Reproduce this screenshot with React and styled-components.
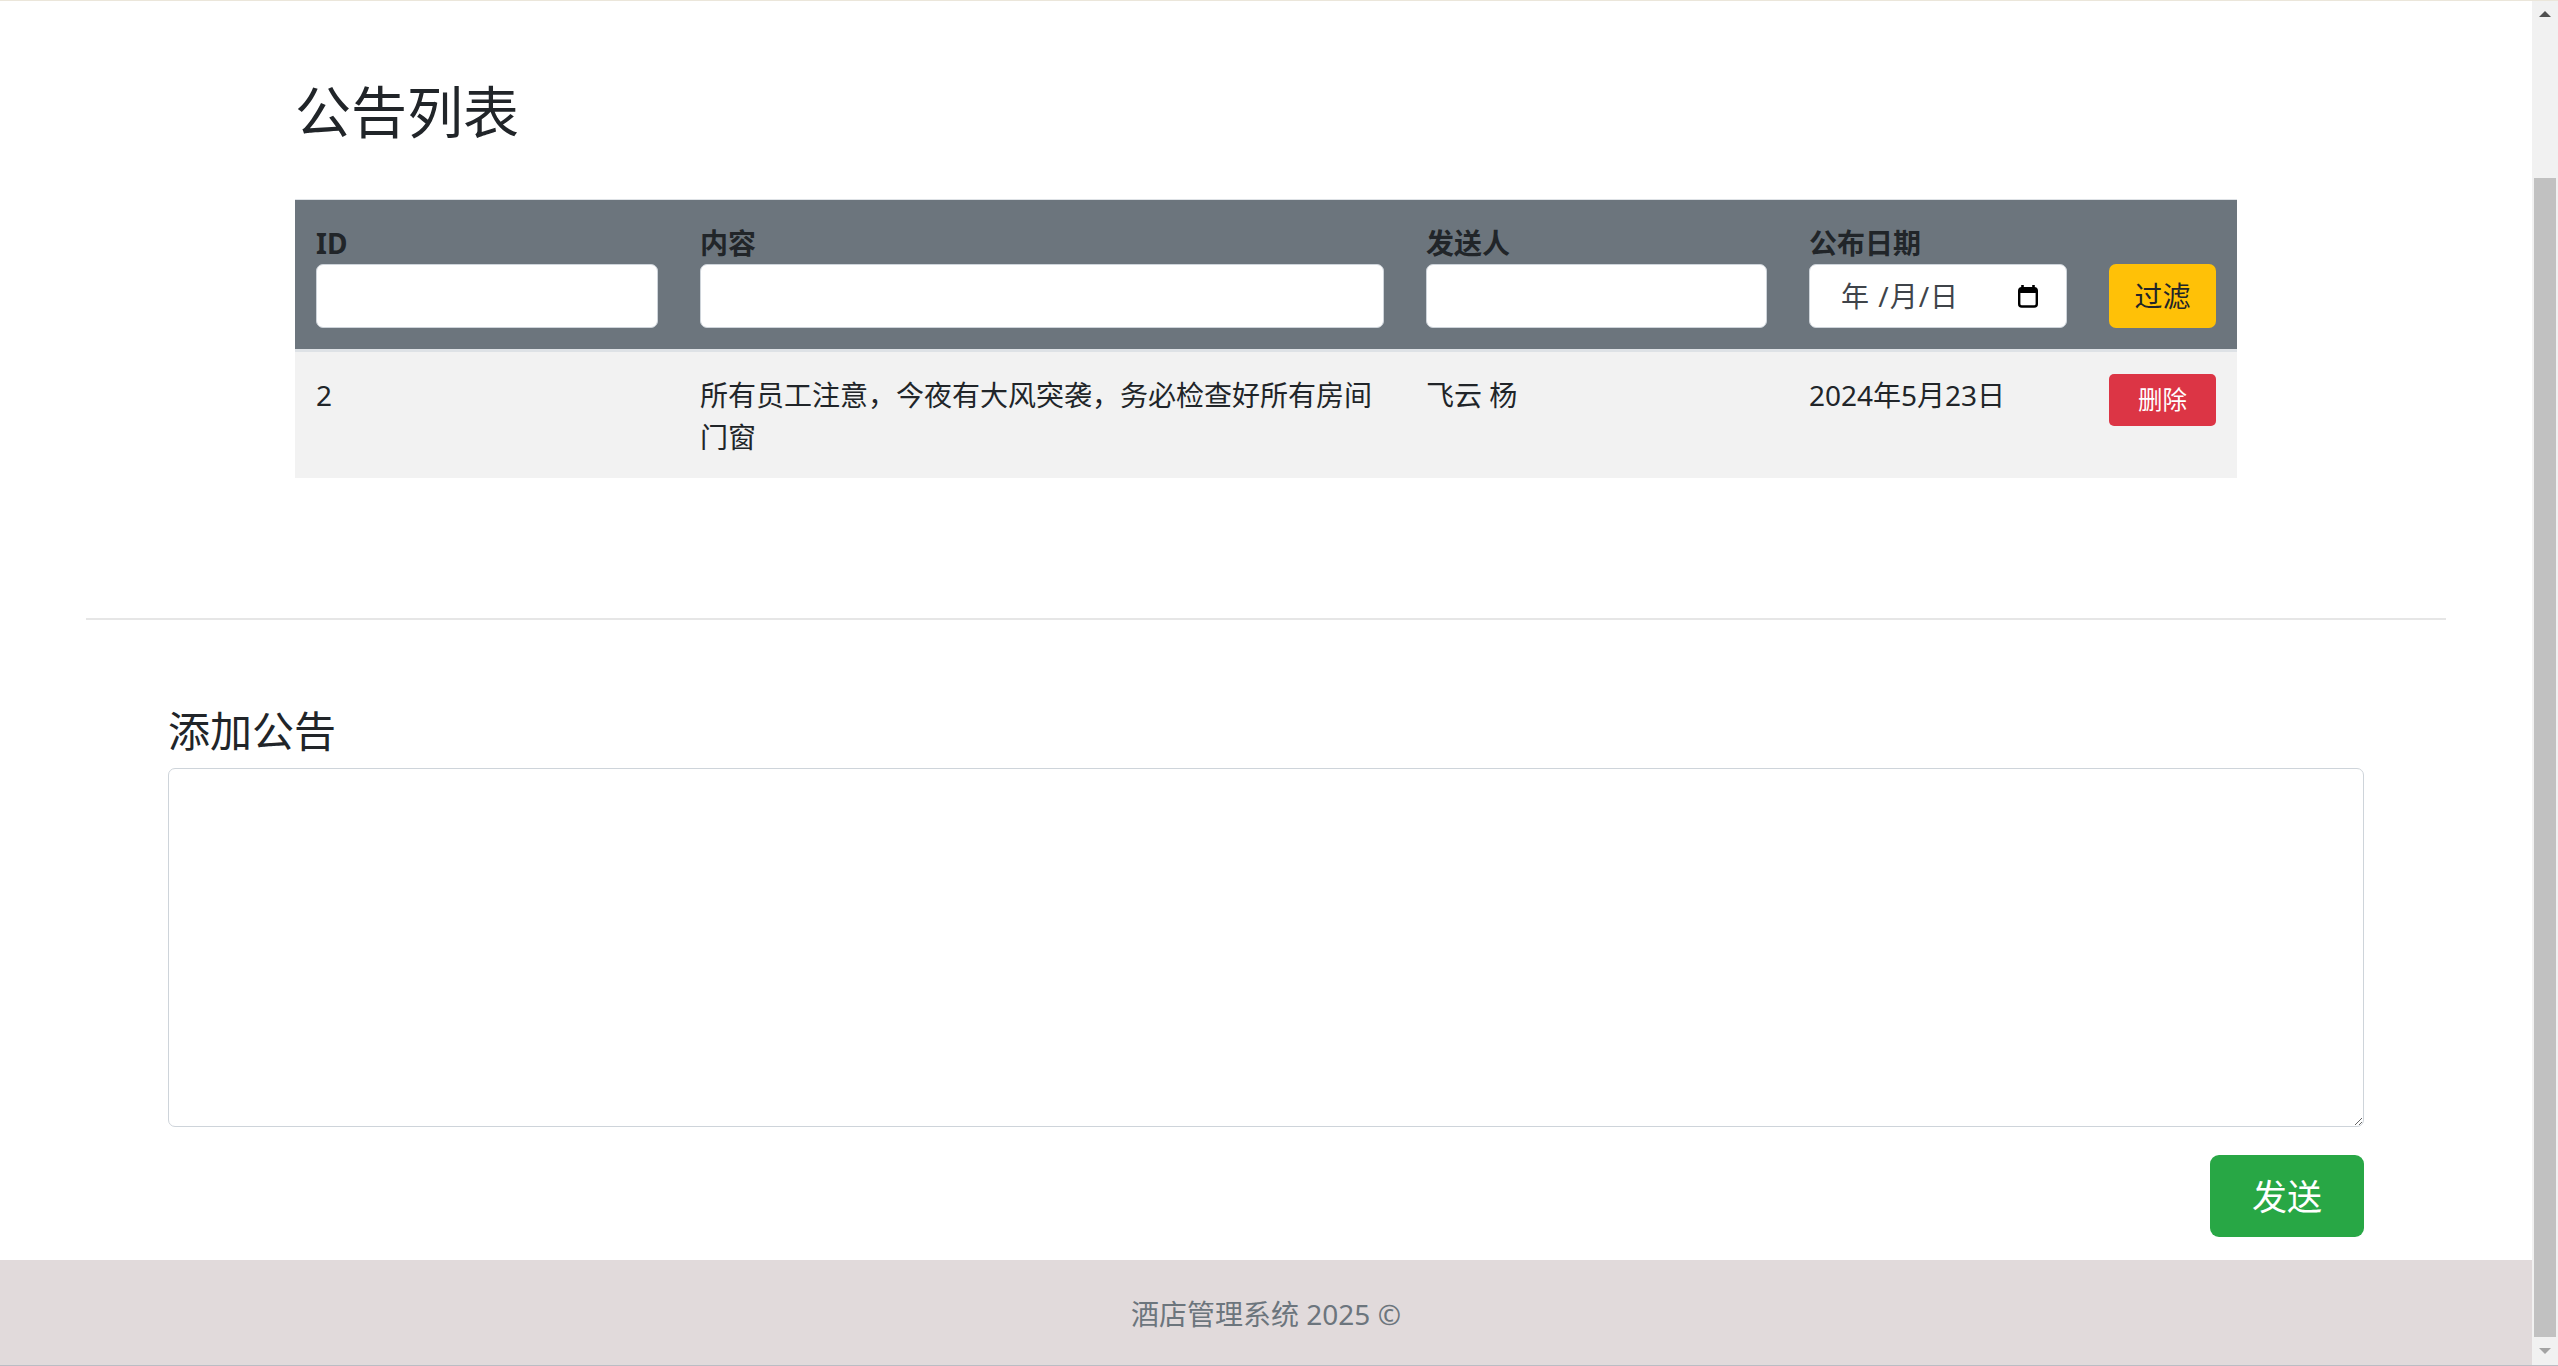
import React from 'react';
import styled, { createGlobalStyle } from 'styled-components';

const GlobalStyle = createGlobalStyle`
  *, *::before, *::after {
    box-sizing: border-box;
  }
  body {
    margin: 0;
    overflow: hidden;
    font-family: "Noto Sans", "Noto Sans CJK SC", sans-serif;
    color: #212529;
    background: #fff;
  }
`;

const Page = styled.div`
  display: flex;
  height: 1366px;
  border-top: 1px solid #ebe6da;
  border-bottom: 1px solid #babdc4;
`;

const Main = styled.div`
  flex: 1;
  display: flex;
  flex-direction: column;
  min-width: 0;
`;

const ListSection = styled.section`
  width: 1942px;
  margin: 0 auto;
`;

const Title = styled.h2`
  margin: 77px 0 0;
  font-size: 56px;
  font-weight: 400;
  line-height: 67px;
`;

const Table = styled.table`
  width: 100%;
  margin-top: 54px;
  border-collapse: collapse;
  table-layout: fixed;
  border-top: 1px solid #dee2e6;
  font-size: 28px;
  line-height: 42px;
`;

const HeadCell = styled.th`
  background: #6c757d;
  padding: 22px 21px 21px;
  text-align: left;
  vertical-align: bottom;
  border-bottom: 3px solid #dee2e6;
  label {
    display: block;
    font-weight: 700;
    color: #212529;
  }
`;

const Cell = styled.td`
  background: #f2f2f2;
  padding: 22px 21px 20px;
  vertical-align: top;
  color: #212529;
`;

const TextInput = styled.input`
  display: block;
  width: 100%;
  height: 64px;
  border: 1px solid #ced4da;
  border-radius: 7px;
  background: #fff;
  font: inherit;
`;

const DateField = styled.div`
  display: flex;
  align-items: center;
  justify-content: space-between;
  height: 64px;
  padding: 0 27px 0 31px;
  border: 1px solid #ced4da;
  border-radius: 7px;
  background: #fff;
  color: #3f444a;
  font-weight: 400;
  span {
    letter-spacing: 1px;
  }
`;

const Button = styled.button`
  border: none;
  font-family: inherit;
  color: ${(p) => p.$color};
  background: ${(p) => p.$bg};
  font-size: ${(p) => p.$size || 28}px;
  height: ${(p) => p.$height}px;
  border-radius: ${(p) => p.$radius || 7}px;
  width: ${(p) => (p.$block ? '100%' : 'auto')};
  padding: 0 ${(p) => p.$padX || 0}px;
  line-height: 1;
  display: block;
`;

const Divider = styled.hr`
  width: 2360px;
  margin: 140px auto 0;
  border: none;
  border-top: 2px solid #e6e6e6;
`;

const AddSection = styled.section`
  width: 2196px;
  margin: 86px auto 0;
`;

const SubTitle = styled.h4`
  margin: 0 0 12px;
  font-size: 42px;
  font-weight: 400;
  line-height: 50px;
`;

const TextArea = styled.textarea`
  display: block;
  width: 100%;
  height: 359px;
  border: 1px solid #ced4da;
  border-radius: 7px;
  font: inherit;
  font-size: 28px;
`;

const Actions = styled.div`
  display: flex;
  justify-content: flex-end;
  margin-top: 28px;
`;

const Footer = styled.footer`
  margin-top: auto;
  height: 105px;
  background: #e1dadb;
  display: flex;
  align-items: center;
  justify-content: center;
  color: #6c757d;
  font-size: 28px;
`;

const Scrollbar = styled.div`
  width: 26px;
  display: flex;
  flex-direction: column;
  background: #f1f1f1;
`;

const ArrowBox = styled.div`
  height: ${(p) => p.$h}px;
  display: flex;
  align-items: center;
  justify-content: center;
`;

const Arrow = styled.span`
  width: 0;
  height: 0;
  border-left: 6px solid transparent;
  border-right: 6px solid transparent;
  ${(p) => (p.$up ? 'border-bottom' : 'border-top')}: 6px solid ${(p) => p.$color};
`;

const Track = styled.div`
  flex: 1;
  display: flex;
  flex-direction: column;
  padding: 151px 2px 0;
`;

const Thumb = styled.div`
  flex: 1;
  background: #c1c1c1;
`;

function CalendarIcon() {
  return (
    <svg width="22" height="24" viewBox="0 0 22 24">
      <path d="M5.5 1v4M16.5 1v4" stroke="#000" strokeWidth="2.6" />
      <rect x="2.2" y="4.2" width="17.6" height="18.3" rx="2.6" fill="none" stroke="#000" strokeWidth="2.4" />
      <rect x="2" y="4" width="18" height="5" rx="1.5" fill="#000" />
    </svg>
  );
}

export default function App() {
  return (
    <>
      <GlobalStyle />
      <Page>
        <Main>
          <ListSection>
            <Title>公告列表</Title>
            <Table>
              <colgroup>
                <col style={{ width: 384 }} />
                <col style={{ width: 726 }} />
                <col style={{ width: 383 }} />
                <col style={{ width: 300 }} />
                <col style={{ width: 149 }} />
              </colgroup>
              <thead>
                <tr>
                  <HeadCell>
                    <label>ID</label>
                    <TextInput type="text" />
                  </HeadCell>
                  <HeadCell>
                    <label>内容</label>
                    <TextInput type="text" />
                  </HeadCell>
                  <HeadCell>
                    <label>发送人</label>
                    <TextInput type="text" />
                  </HeadCell>
                  <HeadCell>
                    <label>公布日期</label>
                    <DateField>
                      <span>年 /月/日</span>
                      <CalendarIcon />
                    </DateField>
                  </HeadCell>
                  <HeadCell>
                    <Button $bg="#ffc107" $color="#212529" $height={64} $block>
                      过滤
                    </Button>
                  </HeadCell>
                </tr>
              </thead>
              <tbody>
                <tr>
                  <Cell>2</Cell>
                  <Cell>所有员工注意，今夜有大风突袭，务必检查好所有房间门窗</Cell>
                  <Cell>飞云 杨</Cell>
                  <Cell>2024年5月23日</Cell>
                  <Cell>
                    <Button $bg="#dc3545" $color="#fff" $height={52} $size={24.5} $radius={5} $block>
                      删除
                    </Button>
                  </Cell>
                </tr>
              </tbody>
            </Table>
          </ListSection>

          <Divider />

          <AddSection>
            <SubTitle>添加公告</SubTitle>
            <TextArea />
            <Actions>
              <Button $bg="#28a745" $color="#fff" $height={82} $size={35} $radius={9} $padX={42}>
                发送
              </Button>
            </Actions>
          </AddSection>

          <Footer>酒店管理系统 2025 ©</Footer>
        </Main>
        <Scrollbar>
          <ArrowBox $h={26}>
            <Arrow $up $color="#505050" />
          </ArrowBox>
          <Track>
            <Thumb />
          </Track>
          <ArrowBox $h={28}>
            <Arrow $color="#a3a3a3" />
          </ArrowBox>
        </Scrollbar>
      </Page>
    </>
  );
}
